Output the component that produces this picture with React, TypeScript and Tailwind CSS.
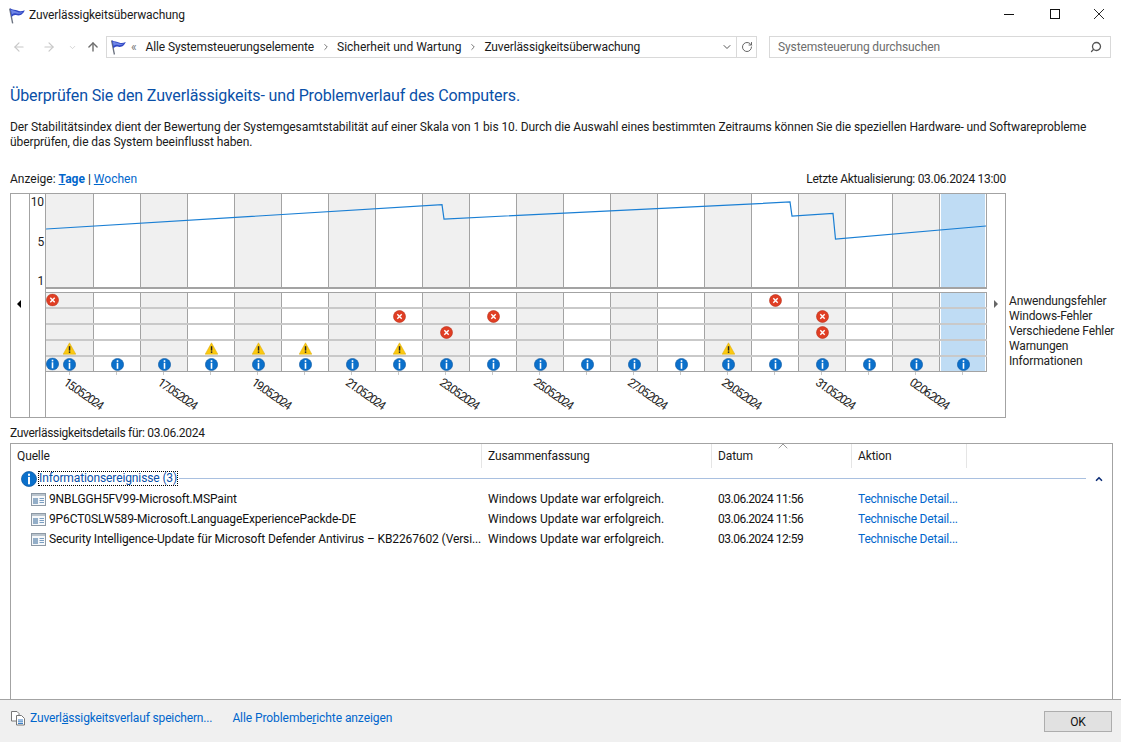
import { ChevronDown, ChevronRight, ChevronUp, ArrowLeft, ArrowRight, ArrowUp, RotateCw, Search } from "lucide-react";

const font = "font-['Roboto','Liberation_Sans',sans-serif]";

const columns = Array.from({ length: 20 }, (_, i) => i);
const dates = ["15.05.2024", "17.05.2024", "19.05.2024", "21.05.2024", "23.05.2024", "25.05.2024", "27.05.2024", "29.05.2024", "31.05.2024", "02.06.2024"];

const cellBg = (i: number) =>
  i === 19
    ? "bg-[#bfdcf4] shadow-[inset_1px_0_0_#fff,inset_-1px_0_0_#fff]"
    : i % 2 === 0
      ? "bg-[#f0f0f0]"
      : "bg-white";

function Flag({ className }: { className: string }) {
  return (
    <svg viewBox="0 0 16 16" className={className}>
      <path d="M1.6 1.5 L4.4 15.5" stroke="#6b7280" strokeWidth="1.3" fill="none" />
      <path d="M1.8 1.2 C4.5 2.8 7 2.4 9 3.4 C11 4.4 13 4.2 15.8 3 C15 5 13.8 6.2 12.5 7.2 C10.5 8.2 9 8 7.5 7.6 C6 7.2 4.6 8 3.4 9.6 Z" fill="#3148c4" />
      <path d="M2.8 2.6 C5 3.6 6.5 3.5 9 4.6 C11 5.4 12.5 5 14 4.6 C12 6.4 10 6.6 8 6 C6 5.6 5 6 3.6 7 Z" fill="#6f86e6" />
    </svg>
  );
}

function ErrorIcon() {
  return (
    <svg viewBox="0 0 13 13" className="w-[13px] h-[13px] shrink-0">
      <circle cx="6.5" cy="6.5" r="6" fill="#e03e24" stroke="#b9301a" strokeWidth="0.6" />
      <path d="M4.3 4.3 L8.7 8.7 M8.7 4.3 L4.3 8.7" stroke="#fff" strokeWidth="1.4" />
    </svg>
  );
}

function WarnIcon() {
  return (
    <svg viewBox="0 0 13 13" className="w-[13px] h-[13px] shrink-0">
      <path d="M6.5 0.8 L12.8 12.2 L0.2 12.2 Z" fill="#fcc90f" stroke="#d9a80a" strokeWidth="0.5" />
      <rect x="5.8" y="4.2" width="1.5" height="4.4" fill="#222" />
      <rect x="5.8" y="9.4" width="1.5" height="1.5" fill="#222" />
    </svg>
  );
}

function InfoIcon({ size = 13 }: { size?: number }) {
  return (
    <svg viewBox="0 0 13 13" width={size} height={size} className="shrink-0">
      <circle cx="6.5" cy="6.5" r="6.1" fill="#0b70cb" stroke="#0a55a0" strokeWidth="0.6" />
      <rect x="5.7" y="2.2" width="1.6" height="1.7" fill="#fff" />
      <rect x="5.7" y="4.8" width="1.6" height="6" fill="#fff" />
    </svg>
  );
}

function EventIcon() {
  return (
    <svg viewBox="0 0 15 13" className="w-[15px] h-[13px] shrink-0">
      <rect x="0.5" y="0.5" width="14" height="12" fill="#f6f8fa" stroke="#8d99a5" />
      <rect x="1" y="1" width="13" height="2" fill="#b9c3cc" />
      <rect x="2" y="5" width="5" height="6" fill="#93aec8" />
      <path d="M8.5 5.5 H13 M8.5 7.5 H13 M8.5 9.5 H13" stroke="#7a9ec2" />
    </svg>
  );
}

function EventRow({ col, icon, left }: { col: number[]; icon: React.ReactNode; left?: boolean }) {
  return (
    <div className="grid grid-cols-[48px_repeat(19,47px)] h-[16px] border-b-2 border-[#c9c9c9] last:h-[14px] last:border-b-0">
      {columns.map((i) => (
        <div
          key={i}
          className={`relative flex items-center justify-center border-r border-[#a3a3a3] ${cellBg(i)}`}
        >
          {col.includes(i) && icon}
          {left && i === 0 && <span className="absolute left-0 top-1/2 -translate-y-1/2 flex">{icon}</span>}
        </div>
      ))}
    </div>
  );
}

function Row({ name, date }: { name: string; date: string }) {
  return (
    <div className="grid grid-cols-[471px_230px_140px_1fr] h-[20px] items-center text-[12px] text-[#111]">
      <div className="flex items-center gap-[3px] pl-[20px] whitespace-nowrap">
        <EventIcon />
        <span>{name}</span>
      </div>
      <div className="pl-[6px] tracking-normal">Windows Update war erfolgreich.</div>
      <div className="pl-[6px] tracking-[-0.5px]">{date}</div>
      <div className="pl-[6px] tracking-[-0.2px] text-[#0066cc]">Technische Detail...</div>
    </div>
  );
}

export default function App() {
  return (
    <div className={`${font} w-[1121px] h-[742px] bg-white text-[12px] tracking-[-0.12px] text-[#1a1a1a] flex flex-col overflow-hidden`}>
      {/* Titelleiste */}
      <div className="h-[30px] flex items-center pl-[8px] shrink-0">
        <Flag className="w-[17px] h-[17px] mr-[4px]" />
        <span>Zuverlässigkeitsüberwachung</span>
        <div className="ml-auto flex items-center h-full -mt-[2px]">
          <div className="w-[46px] flex justify-center">
            <svg viewBox="0 0 10 10" className="w-[10px] h-[10px]"><path d="M0 5.5 H10" stroke="#111" /></svg>
          </div>
          <div className="w-[45px] flex justify-center">
            <svg viewBox="0 0 10 10" className="w-[10px] h-[10px]"><rect x="0.5" y="0.5" width="9" height="9" fill="none" stroke="#111" /></svg>
          </div>
          <div className="w-[44px] flex justify-center">
            <svg viewBox="0 0 10 10" className="w-[10px] h-[10px]"><path d="M0 0 L10 10 M10 0 L0 10" stroke="#111" strokeWidth="0.9" /></svg>
          </div>
        </div>
      </div>

      {/* Adressleiste */}
      <div className="h-[24px] mt-[5px] flex items-center shrink-0">
        <div className="w-[106px] flex items-center pl-[12px] text-[#c8c8c8]">
          <ArrowLeft size={14} strokeWidth={2} />
          <ArrowRight size={14} strokeWidth={2} className="ml-[16px]" />
          <ChevronDown size={9} strokeWidth={2} className="ml-[12px]" />
          <ArrowUp size={14} strokeWidth={2.4} className="ml-[9px] text-[#6d6d6d]" />
        </div>
        <div className="w-[651px] h-[22px] border border-[#d9d9d9] flex items-center pl-[3px]">
          <Flag className="w-[16px] h-[16px]" />
          <span className="ml-[5px] mr-[8px] text-[#777]">«</span>
          <span className="ml-[1px]">Alle Systemsteuerungselemente</span>
          <ChevronRight size={10} className="ml-[7px] mr-[6px] text-[#777]" strokeWidth={2.4} />
          <span className="tracking-normal">Sicherheit und Wartung</span>
          <ChevronRight size={10} className="ml-[7px] mr-[6px] text-[#777]" strokeWidth={2.4} />
          <span>Zuverlässigkeitsüberwachung</span>
          <ChevronDown size={12} className="ml-auto mr-[3px] text-[#555]" strokeWidth={2} />
          <div className="h-full w-[20px] border-l border-[#d9d9d9] flex items-center justify-center">
            <RotateCw size={12} className="text-[#666]" />
          </div>
        </div>
        <div className="w-[342px] h-[22px] ml-[12px] border border-[#d9d9d9] flex items-center pl-[8px] pr-[8px] text-[#6d6d6d]">
          <span>Systemsteuerung durchsuchen</span>
          <Search size={12} strokeWidth={2.6} className="ml-auto -scale-x-100 text-[#555]" />
        </div>
      </div>

      {/* Kopf */}
      <h1 className="mt-[26px] ml-[10px] text-[16px] tracking-[-0.13px] leading-[22px] text-[#0a50a8] shrink-0">
        Überprüfen Sie den Zuverlässigkeits- und Problemverlauf des Computers.
      </h1>
      <p className="mt-[13px] mx-[10px] w-[1090px] leading-[15px] tracking-[-0.08px] shrink-0">
        Der Stabilitätsindex dient der Bewertung der Systemgesamtstabilität auf einer Skala von 1 bis 10. Durch die Auswahl eines bestimmten Zeitraums können Sie die speziellen Hardware- und Softwareprobleme überprüfen, die das System beeinflusst haben.
      </p>

      <div className="mt-[21px] ml-[10px] w-[996px] h-[16px] flex justify-between items-center shrink-0">
        <span className="tracking-normal">
          Anzeige: <span className="font-bold text-[#0066cc]"><span className="underline">T</span>age</span> | <span className="text-[#0066cc]"><span className="underline">W</span>ochen</span>
        </span>
        <span className="tracking-[-0.3px]">Letzte Aktualisierung: 03.06.2024 13:00</span>
      </div>

      {/* Diagramm */}
      <div className="mt-[6px] ml-[10px] flex items-start shrink-0">
        <div className="w-[996px] h-[225px] border border-[#a3a3a3] flex shrink-0">
          <div className="w-[19px] border-r border-[#a3a3a3] shrink-0 relative">
            <span className="absolute top-[106px] left-[6px] w-0 h-0 border-y-[4px] border-y-transparent border-r-[4px] border-r-black" />
          </div>
          <div className="w-[16px] border-r border-[#a3a3a3] shrink-0 flex flex-col items-end pr-[1px] text-[#222]">
            <span className="mt-[1px] leading-[14px]">10</span>
            <span className="mt-[26px] leading-[14px]">5</span>
            <span className="mt-[25px] leading-[14px]">1</span>
          </div>
          <div className="w-[941px] shrink-0 flex flex-col">
            <div className="relative h-[95px] grid grid-cols-[48px_repeat(19,47px)] border-b-2 border-[#a3a3a3]">
              {columns.map((i) => (
                <div
                  key={i}
                  className={`border-r border-[#a3a3a3] ${cellBg(i)}`}
                />
              ))}
              <svg viewBox="0 0 941 93" className="absolute left-0 top-0 w-[941px] h-[93px]">
                <polyline
                  points="0,35 396,10.7 398,25 744,8 746,22 787,19.5 789.5,45 940,32"
                  fill="none"
                  stroke="#1a7fd4"
                  strokeWidth="1.2"
                />
              </svg>
            </div>
            <div className="h-[3px] bg-white" />
            <div className="border-b border-[#a3a3a3] border-t border-t-[#a3a3a3]">
              <EventRow col={[15]} icon={<ErrorIcon />} left />
              <EventRow col={[7, 9, 16]} icon={<ErrorIcon />} />
              <EventRow col={[8, 16]} icon={<ErrorIcon />} />
              <EventRow col={[0, 3, 4, 5, 7, 14]} icon={<WarnIcon />} />
              <EventRow col={columns} icon={<InfoIcon />} left />
            </div>
            <div className="relative flex-1 grid grid-cols-[48px_repeat(19,47px)]">
              {columns.map((i) => (
                <div key={i} className="relative">
                  <div className={`absolute ${i === 0 ? "left-[23px]" : "left-[22px]"} top-0 w-px h-[3px] bg-[#c9c9c9]`} />
                  {i % 2 === 0 && (
                    <span className={`absolute ${i === 0 ? "left-[19px]" : "left-[18px]"} top-0 whitespace-nowrap origin-left rotate-[35deg] text-[12px] tracking-[-1.6px] text-[#222]`}>
                      {dates[i / 2]}
                    </span>
                  )}
                </div>
              ))}
            </div>
          </div>
          <div className="flex-1 relative">
            <span className="absolute top-[106px] left-[7px] w-0 h-0 border-y-[4px] border-y-transparent border-l-[4px] border-l-[#666]" />
          </div>
        </div>
        <div className="ml-[3px] mt-[101px] leading-[15px] tracking-[-0.15px] whitespace-nowrap text-[#222]">
          <div>Anwendungsfehler</div>
          <div>Windows-Fehler</div>
          <div>Verschiedene Fehler</div>
          <div>Warnungen</div>
          <div>Informationen</div>
        </div>
      </div>

      <div className="mt-[7px] ml-[10px] leading-[16px] tracking-[-0.3px] shrink-0">Zuverlässigkeitsdetails für: 03.06.2024</div>

      {/* Liste */}
      <div className="mt-[2px] mx-[10px] w-[1103px] h-[257px] border border-[#a3a3a3] flex flex-col shrink-0">
        <div className="relative h-[24px] shrink-0 grid grid-cols-[471px_230px_140px_115px] items-center">
          <div className="pl-[6px] h-full flex items-center border-r border-[#e5e5e5]">Quelle</div>
          <div className="pl-[6px] h-full flex items-center border-r border-[#e5e5e5]">Zusammenfassung</div>
          <div className="pl-[6px] h-full flex items-center border-r border-[#e5e5e5]">Datum</div>
          <div className="pl-[6px] h-full flex items-center border-r border-[#e5e5e5]">Aktion</div>
          <ChevronUp size={16} className="absolute left-[764px] -top-[6px] text-[#777]" strokeWidth={1.1} />
        </div>
        <div className="h-[21px] shrink-0 flex items-center pl-[10px]">
          <InfoIcon size={16} />
          <span className="text-[#0a50a8] border border-dotted border-black leading-[13px] ml-[1px]">
            Informationsereignisse (3)
          </span>
          <div className="flex-1 h-px bg-[#a9c0e0] ml-[1px]" />
          <ChevronUp size={10} strokeWidth={4} className="mx-[8px] text-[#0f2f78]" />
        </div>
        <Row name="9NBLGGH5FV99-Microsoft.MSPaint" date="03.06.2024 11:56" />
        <Row name="9P6CT0SLW589-Microsoft.LanguageExperiencePackde-DE" date="03.06.2024 11:56" />
        <Row name="Security Intelligence-Update für Microsoft Defender Antivirus – KB2267602 (Versi..." date="03.06.2024 12:59" />
      </div>

      {/* Fußleiste */}
      <div className="flex-1 bg-[#f0f0f0] flex items-center pl-[10px] pr-[9px] pb-[6px] tracking-[-0.15px] text-[#0066cc] mt-[-1px] border-t border-[#a3a3a3]">
        <svg viewBox="0 0 16 16" className="w-[16px] h-[16px] mr-[4px] shrink-0">
          <path d="M1.5 1.5 H7 L9 3.5 V11 H1.5 Z" fill="#fff" stroke="#777" />
          <path d="M6.5 5.5 H11.5 L14.5 8.5 V15 H6.5 Z" fill="#fff" stroke="#777" />
          <path d="M8 10 H13 M8 11.8 H13 M8 13.5 H13" stroke="#3c7fc4" />
        </svg>
        <span>Zuverl<span className="underline">ä</span>ssigkeitsverlauf speichern...</span>
        <span className="ml-[20px] tracking-[-0.08px]">Alle Problembe<span className="underline">r</span>ichte anzeigen</span>
        <button className="ml-auto w-[68px] h-[21px] mt-[7px] border border-[#adadad] bg-[#e1e1e1] text-[#111] flex items-center justify-center">
          OK
        </button>
      </div>
    </div>
  );
}
